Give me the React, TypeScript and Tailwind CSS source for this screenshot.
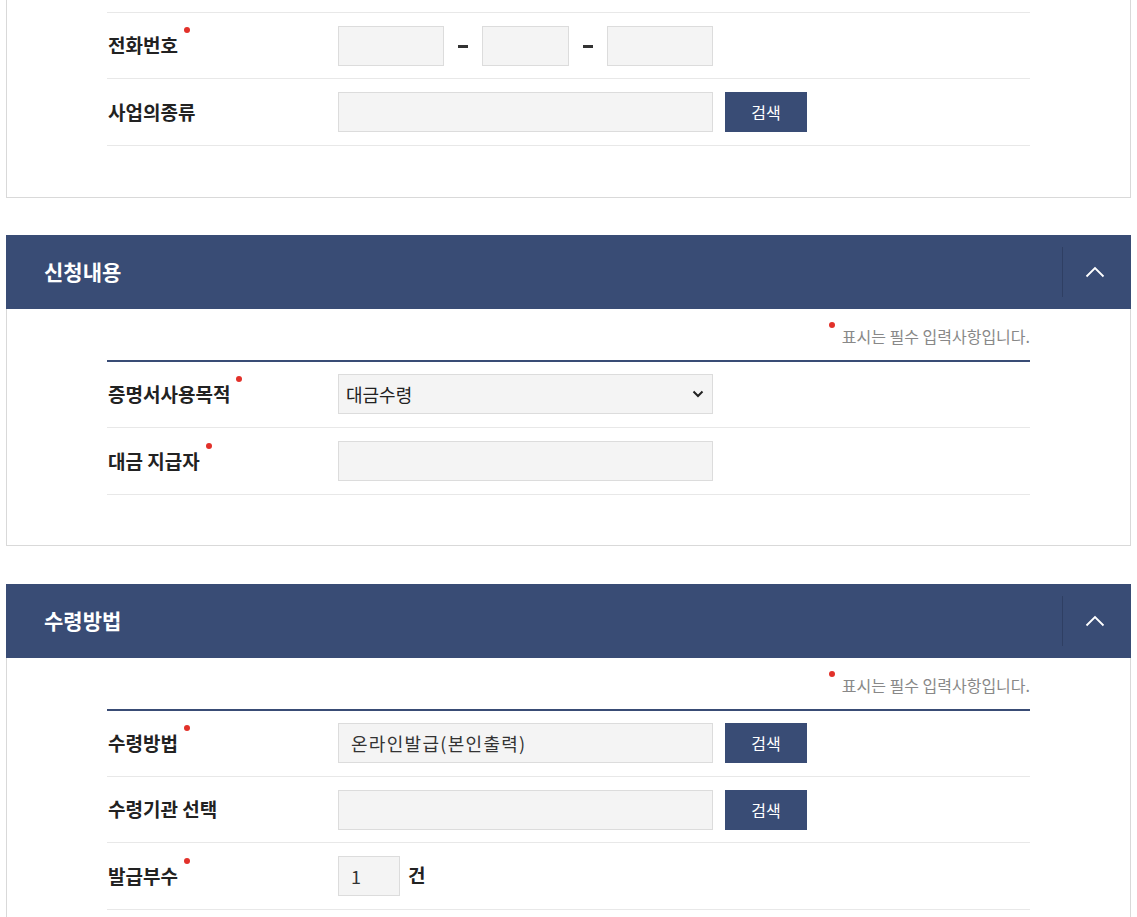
import React from "react";

const FONT = { fontFamily: '"Noto Sans CJK KR", "Noto Sans", sans-serif' };

function Label({ text, required }: { text: string; required?: boolean }) {
  return (
    <div className="w-[231px] shrink-0 pl-px">
      <span className="relative text-[19px] font-bold text-[#222]">
        {text}
        {required && (
          <span className="absolute -right-[12px] -top-[4px] w-[6px] h-[6px] rounded-full bg-[#e2312a]" />
        )}
      </span>
    </div>
  );
}

function Row({ label, required, children }: { label: string; required?: boolean; children: React.ReactNode }) {
  return (
    <div className="flex items-center border-b border-[#e8e8e8] h-[66.4px]">
      <Label text={label} required={required} />
      <div className="flex items-center">{children}</div>
    </div>
  );
}

function TextBox({ w, value }: { w: string; value?: string }) {
  return (
    <div className={`${w} h-[40px] bg-[#f4f4f4] border border-[#dcdcdc] flex items-center px-3 text-[18px] tracking-[1.3px] text-[#333]`}>
      {value}
    </div>
  );
}

function SearchBtn() {
  return (
    <button className="ml-3 w-[82px] h-[40px] bg-[#394c75] text-white text-[16px]">검색</button>
  );
}

function Dash() {
  return (
    <div className="w-[38px] flex justify-center">
      <span className="block w-[10px] h-[3px] bg-[#333] mt-px" />
    </div>
  );
}

function Notice() {
  return (
    <div className="flex justify-end pt-[15px] pb-[12px]">
      <span className="relative text-[16px] text-[#888] leading-[24px]">
        <span className="absolute -left-[13px] -top-[2px] w-[6px] h-[6px] rounded-full bg-[#e2312a]" />
        표시는 필수 입력사항입니다.
      </span>
    </div>
  );
}

function Section({ title, children }: { title: string; children: React.ReactNode }) {
  return (
    <div>
      <div className="flex items-center h-[74px] bg-[#394c75]">
        <h2 className="flex-1 pl-[38px] text-[21px] font-bold text-white">{title}</h2>
        <div className="w-px h-[50px] bg-[#2f3f63]" />
        <div className="w-[68px] flex items-center justify-center pr-[4px]">
          <svg width="20" height="12" viewBox="0 0 20 12" fill="none">
            <polyline points="1.5,10.5 10,2 18.5,10.5" stroke="white" strokeWidth="1.8" />
          </svg>
        </div>
      </div>
      <div className="border-x border-b border-[#d9d9d9] px-[100px] pb-[50px]">
        <Notice />
        <div className="border-t-2 border-[#394c75]">{children}</div>
      </div>
    </div>
  );
}

export default function App() {
  return (
    <div className="bg-white min-h-screen px-[6px]" style={FONT}>
      {/* previous section, scrolled */}
      <div className="border-x border-b border-[#d9d9d9] px-[100px] pt-[12px] pb-[51px]">
        <div className="border-t border-[#e8e8e8]">
          <Row label="전화번호" required>
            <TextBox w="w-[106px]" />
            <Dash />
            <TextBox w="w-[87px]" />
            <Dash />
            <TextBox w="w-[106px]" />
          </Row>
          <Row label="사업의종류">
            <TextBox w="w-[375px]" />
            <SearchBtn />
          </Row>
        </div>
      </div>

      <div className="h-[37px]" />

      <Section title="신청내용">
        <Row label="증명서사용목적" required>
          <div className="w-[375px] h-[40px] bg-[#f4f4f4] border border-[#dcdcdc] flex items-center justify-between pl-[7px] pr-[8px] text-[18px] text-[#222]">
            <span>대금수령</span>
            <svg width="12" height="8" viewBox="0 0 12 8" fill="none">
              <polyline points="1.5,1.5 6,6 10.5,1.5" stroke="#222" strokeWidth="2" />
            </svg>
          </div>
        </Row>
        <Row label="대금 지급자" required>
          <TextBox w="w-[375px]" />
        </Row>
      </Section>

      <div className="h-[38px]" />

      <Section title="수령방법">
        <Row label="수령방법" required>
          <TextBox w="w-[375px]" value="온라인발급(본인출력)" />
          <SearchBtn />
        </Row>
        <Row label="수령기관 선택">
          <TextBox w="w-[375px]" />
          <SearchBtn />
        </Row>
        <Row label="발급부수" required>
          <TextBox w="w-[62px]" value="1" />
          <span className="ml-2 text-[19px] font-bold text-[#222] mt-[-2px]">건</span>
        </Row>
      </Section>
    </div>
  );
}
